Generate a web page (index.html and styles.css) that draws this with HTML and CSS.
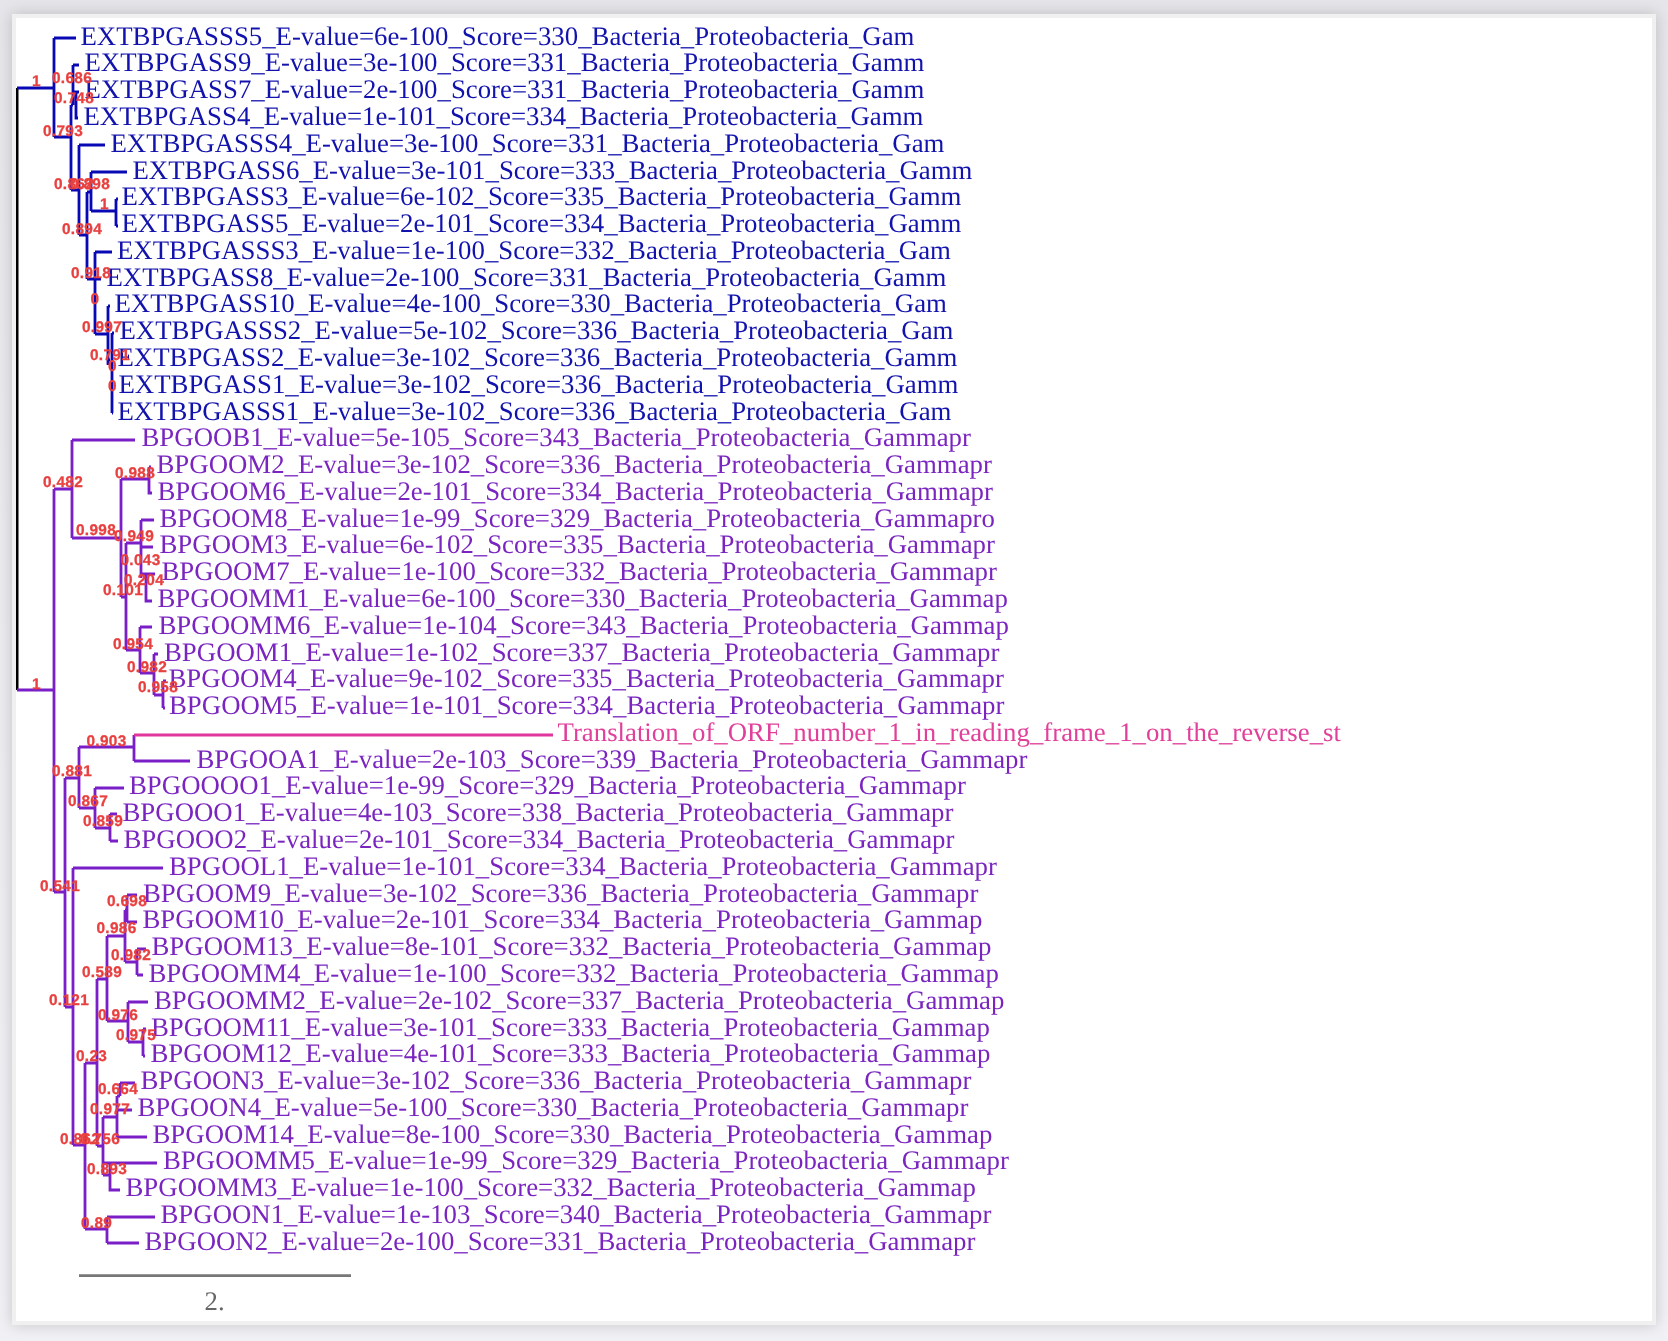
FILE: index.html
```html
<!DOCTYPE html>
<html lang="en">
<head>
<meta charset="utf-8">
<title>Phylogenetic tree</title>
<link rel="stylesheet" href="styles.css">
</head>
<body>
<main class="sheet">
<svg class="tree" viewBox="16 18 1636 1303" xmlns="http://www.w3.org/2000/svg" role="img" aria-label="Phylogenetic tree">
  <path class="ln root" d="M17 88V690"/>
  <path class="ln purple" d="M17 690H54M54 489V892M54 489H72M72 440V538M72 440H135M72 538H121M121 479V597M121 479H149M149 467V493H152M149 467H151M121 597H126M126 543V650M126 543H141M141 520V578M141 520H154M141 547H153M141 574H155M146 574V601H152M126 650H140M140 627V673M140 627H152M140 673H154M154 654V695M154 654H158M154 695H163M163 681V708M163 681H166M163 708H165M54 892H65M65 778V1007M65 778H79M79 747V808M79 747H134M134 735V761M134 761H190M79 808H95M95 788V828M95 788H124M95 828H110M110 814V841M110 814H117M110 841H118M65 1007H73M73 868V1145M73 868H163M73 1145H85M85 1063V1229M85 1063H97M97 979V1146M97 979H107M107 936V1021M107 936H125M125 910V962M125 910H127M127 895V922M127 895H137M127 922H137M125 962H137M137 949V975M137 949H146M137 975H143M107 1021H128M128 1002V1042M128 1002H148M128 1042H143M143 1029V1056M143 1029H146M143 1056H145M97 1146H103M103 1117V1175M103 1117H117M117 1096V1137M117 1137H147M117 1110H132M117 1096H120M120 1083V1096M120 1083H135M103 1163H157M103 1175H110M110 1163V1190H120M85 1229H107M107 1217V1243M107 1217H155M107 1243H139"/>
  <path class="ln blue" d="M17 88H54M54 38V137M54 38H76M54 137H71M71 105V190M71 105H73M73 65V105M73 65H79M73 92H79M73 92H76M76 92V118H78M71 190H79M79 145V235M79 145H105M79 235H87M87 192V279M87 192H91M91 172V211M91 172H127M91 211H116M116 199V226M116 199H118M116 226H118M87 279H95M95 252V334M95 252H112M95 279H101M95 334H108M108 306V365M108 306H110M108 360H110M112 333V413M112 333H114M112 387H113M112 413H113"/>
  <path class="ln pink" d="M134 735H553"/>
  <path class="ln scale" d="M79 1275.7H351"/>

  <g class="names blue-t">
    <text x="81" y="44.1">EXTBPGASSS5_E-value=6e-100_Score=330_Bacteria_Proteobacteria_Gam</text>
    <text x="85" y="70.9">EXTBPGASS9_E-value=3e-100_Score=331_Bacteria_Proteobacteria_Gamm</text>
    <text x="85" y="97.7">EXTBPGASS7_E-value=2e-100_Score=331_Bacteria_Proteobacteria_Gamm</text>
    <text x="84" y="124.4">EXTBPGASS4_E-value=1e-101_Score=334_Bacteria_Proteobacteria_Gamm</text>
    <text x="111" y="151.2">EXTBPGASSS4_E-value=3e-100_Score=331_Bacteria_Proteobacteria_Gam</text>
    <text x="133" y="178">EXTBPGASS6_E-value=3e-101_Score=333_Bacteria_Proteobacteria_Gamm</text>
    <text x="122" y="204.8">EXTBPGASS3_E-value=6e-102_Score=335_Bacteria_Proteobacteria_Gamm</text>
    <text x="122" y="231.6">EXTBPGASS5_E-value=2e-101_Score=334_Bacteria_Proteobacteria_Gamm</text>
    <text x="117.5" y="258.3">EXTBPGASSS3_E-value=1e-100_Score=332_Bacteria_Proteobacteria_Gam</text>
    <text x="107" y="285.1">EXTBPGASS8_E-value=2e-100_Score=331_Bacteria_Proteobacteria_Gamm</text>
    <text x="115" y="311.9">EXTBPGASS10_E-value=4e-100_Score=330_Bacteria_Proteobacteria_Gam</text>
    <text x="120" y="338.7">EXTBPGASSS2_E-value=5e-102_Score=336_Bacteria_Proteobacteria_Gam</text>
    <text x="118" y="365.5">EXTBPGASS2_E-value=3e-102_Score=336_Bacteria_Proteobacteria_Gamm</text>
    <text x="119" y="392.2">EXTBPGASS1_E-value=3e-102_Score=336_Bacteria_Proteobacteria_Gamm</text>
    <text x="118" y="419">EXTBPGASSS1_E-value=3e-102_Score=336_Bacteria_Proteobacteria_Gam</text>
  </g>
  <g class="names purple-t">
    <text x="142" y="445.8">BPGOOB1_E-value=5e-105_Score=343_Bacteria_Proteobacteria_Gammapr</text>
    <text x="157" y="472.6">BPGOOM2_E-value=3e-102_Score=336_Bacteria_Proteobacteria_Gammapr</text>
    <text x="158" y="499.4">BPGOOM6_E-value=2e-101_Score=334_Bacteria_Proteobacteria_Gammapr</text>
    <text x="160" y="526.1">BPGOOM8_E-value=1e-99_Score=329_Bacteria_Proteobacteria_Gammapro</text>
    <text x="160" y="552.9">BPGOOM3_E-value=6e-102_Score=335_Bacteria_Proteobacteria_Gammapr</text>
    <text x="162" y="579.7">BPGOOM7_E-value=1e-100_Score=332_Bacteria_Proteobacteria_Gammapr</text>
    <text x="158" y="606.5">BPGOOMM1_E-value=6e-100_Score=330_Bacteria_Proteobacteria_Gammap</text>
    <text x="159" y="633.3">BPGOOMM6_E-value=1e-104_Score=343_Bacteria_Proteobacteria_Gammap</text>
    <text x="164.5" y="660">BPGOOM1_E-value=1e-102_Score=337_Bacteria_Proteobacteria_Gammapr</text>
    <text x="169" y="686.8">BPGOOM4_E-value=9e-102_Score=335_Bacteria_Proteobacteria_Gammapr</text>
    <text x="169.5" y="713.6">BPGOOM5_E-value=1e-101_Score=334_Bacteria_Proteobacteria_Gammapr</text>
  </g>
  <text class="names pink-t" x="558" y="740.4">Translation_of_ORF_number_1_in_reading_frame_1_on_the_reverse_st</text>
  <g class="names purple-t">
    <text x="197" y="767.2">BPGOOA1_E-value=2e-103_Score=339_Bacteria_Proteobacteria_Gammapr</text>
    <text x="129.5" y="793.9">BPGOOOO1_E-value=1e-99_Score=329_Bacteria_Proteobacteria_Gammapr</text>
    <text x="123" y="820.7">BPGOOO1_E-value=4e-103_Score=338_Bacteria_Proteobacteria_Gammapr</text>
    <text x="124" y="847.5">BPGOOO2_E-value=2e-101_Score=334_Bacteria_Proteobacteria_Gammapr</text>
    <text x="169.5" y="874.3">BPGOOL1_E-value=1e-101_Score=334_Bacteria_Proteobacteria_Gammapr</text>
    <text x="143.5" y="901.1">BPGOOM9_E-value=3e-102_Score=336_Bacteria_Proteobacteria_Gammapr</text>
    <text x="143" y="927.8">BPGOOM10_E-value=2e-101_Score=334_Bacteria_Proteobacteria_Gammap</text>
    <text x="152" y="954.6">BPGOOM13_E-value=8e-101_Score=332_Bacteria_Proteobacteria_Gammap</text>
    <text x="149" y="981.4">BPGOOMM4_E-value=1e-100_Score=332_Bacteria_Proteobacteria_Gammap</text>
    <text x="154.5" y="1008.2">BPGOOMM2_E-value=2e-102_Score=337_Bacteria_Proteobacteria_Gammap</text>
    <text x="151.5" y="1035">BPGOOM11_E-value=3e-101_Score=333_Bacteria_Proteobacteria_Gammap</text>
    <text x="151" y="1061.7">BPGOOM12_E-value=4e-101_Score=333_Bacteria_Proteobacteria_Gammap</text>
    <text x="141" y="1088.5">BPGOON3_E-value=3e-102_Score=336_Bacteria_Proteobacteria_Gammapr</text>
    <text x="138" y="1115.3">BPGOON4_E-value=5e-100_Score=330_Bacteria_Proteobacteria_Gammapr</text>
    <text x="153" y="1142.1">BPGOOM14_E-value=8e-100_Score=330_Bacteria_Proteobacteria_Gammap</text>
    <text x="163.5" y="1168.9">BPGOOMM5_E-value=1e-99_Score=329_Bacteria_Proteobacteria_Gammapr</text>
    <text x="126" y="1195.6">BPGOOMM3_E-value=1e-100_Score=332_Bacteria_Proteobacteria_Gammap</text>
    <text x="161" y="1222.4">BPGOON1_E-value=1e-103_Score=340_Bacteria_Proteobacteria_Gammapr</text>
    <text x="145" y="1249.2">BPGOON2_E-value=2e-100_Score=331_Bacteria_Proteobacteria_Gammapr</text>
  </g>
  <text class="names scale-t" x="205" y="1309">2.</text>

  <g class="support">
    <text x="32" y="85">1</text>
    <text x="52" y="82">0.686</text>
    <text x="54" y="102">0.748</text>
    <text x="43" y="135">0.793</text>
    <text x="54" y="188">0.862</text>
    <text x="70" y="188">0.898</text>
    <text x="100" y="208">1</text>
    <text x="62" y="233">0.894</text>
    <text x="71" y="277">0.918</text>
    <text x="90.5" y="303">0</text>
    <text x="82" y="331">0.997</text>
    <text x="90" y="359">0.791</text>
    <text x="108" y="370">0</text>
    <text x="108" y="390">0</text>
    <text x="43" y="486">0.482</text>
    <text x="115" y="477">0.988</text>
    <text x="76" y="534">0.998</text>
    <text x="114" y="540">0.949</text>
    <text x="120.5" y="564">0.043</text>
    <text x="124" y="584">0.204</text>
    <text x="103" y="594">0.101</text>
    <text x="113" y="648">0.954</text>
    <text x="127" y="671">0.982</text>
    <text x="138" y="691">0.958</text>
    <text x="32" y="688">1</text>
    <text x="86.5" y="745">0.903</text>
    <text x="52" y="775">0.881</text>
    <text x="68" y="805">0.867</text>
    <text x="83" y="825">0.859</text>
    <text x="40" y="890">0.541</text>
    <text x="107" y="905">0.698</text>
    <text x="96.5" y="932">0.986</text>
    <text x="111" y="959">0.982</text>
    <text x="82" y="976">0.589</text>
    <text x="49" y="1004">0.121</text>
    <text x="98" y="1019">0.976</text>
    <text x="116" y="1039">0.975</text>
    <text x="76" y="1060">0.23</text>
    <text x="98" y="1093">0.664</text>
    <text x="90" y="1113">0.977</text>
    <text x="60" y="1143">0.862</text>
    <text x="80" y="1143">0.756</text>
    <text x="87" y="1173">0.893</text>
    <text x="81" y="1227">0.89</text>
  </g>
</svg>
</main>
</body>
</html>
```

FILE: styles.css
```css
html, body { margin: 0; height: 100%; }
body {
  background: linear-gradient(#e6e6ea, #ececf0 50%, #f1f1f5);
  overflow: hidden;
}
.sheet {
  box-sizing: border-box;
  width: 1644px;
  height: 1311px;
  margin: 14px 0 0 12px;
  background: #fff;
  border: 4px solid #f0f0f0;
  box-shadow: 0 0 14px rgba(0, 0, 0, .18);
}
.tree {
  display: block;
  width: 1636px;
  height: 1303px;
  filter: blur(.45px);
}
.ln { fill: none; stroke-width: 2.8; stroke-linecap: butt; stroke-linejoin: miter; }
.root { stroke: #000; stroke-width: 3; }
.blue { stroke: #0808b4; }
.purple { stroke: #7a1fc8; }
.pink { stroke: #e0359c; }
.scale { stroke: #777; }
.names {
  font-family: "Liberation Serif", "Times New Roman", serif;
  font-size: 26.8px;
  text-rendering: geometricPrecision;
  transform: translate(-.5px, .6px);
}
.blue-t { fill: #1212ad; }
.purple-t { fill: #7a25bf; }
.pink-t { fill: #e0409a; }
.scale-t { fill: #666; }
.support {
  font-family: "Liberation Sans", Arial, sans-serif;
  font-size: 15.4px;
  font-weight: 700;
  letter-spacing: .3px;
  text-rendering: geometricPrecision;
  fill: #e8403f;
  stroke: #e8403f;
  stroke-width: .3px;
  transform: translateY(.5px);
}
```
